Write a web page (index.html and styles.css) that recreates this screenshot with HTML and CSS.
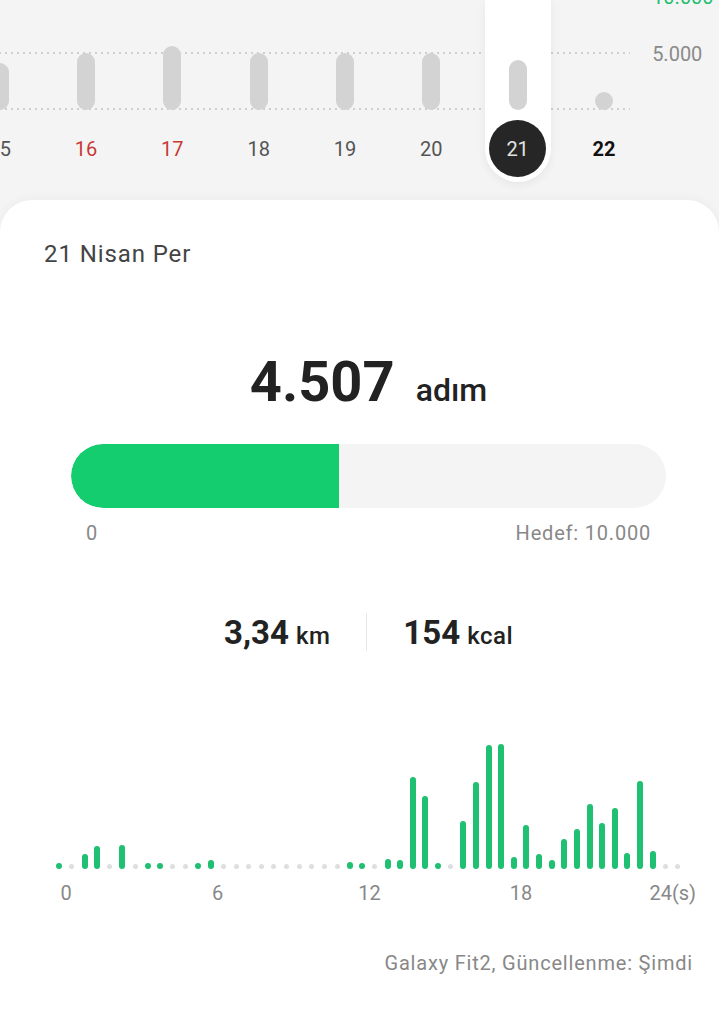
FILE: index.html
```html
<!DOCTYPE html>
<html lang="tr">
<head>
    <meta charset="UTF-8">
    <meta name="viewport" content="width=device-width, initial-scale=1.0">
    <title>Adımlar</title>
    <link rel="stylesheet" href="styles.css">
</head>
<body>
    <section class="week">
        <div class="week-days">
            <div class="day"><div class="day-inner"><div class="day-plot"><span class="day-bar" style="height:47px"></span></div><span class="day-num">15</span></div></div>
            <div class="day"><div class="day-inner"><div class="day-plot"><span class="day-bar" style="height:57px"></span></div><span class="day-num holiday">16</span></div></div>
            <div class="day"><div class="day-inner"><div class="day-plot"><span class="day-bar" style="height:64px"></span></div><span class="day-num holiday">17</span></div></div>
            <div class="day"><div class="day-inner"><div class="day-plot"><span class="day-bar" style="height:57px"></span></div><span class="day-num">18</span></div></div>
            <div class="day"><div class="day-inner"><div class="day-plot"><span class="day-bar" style="height:57px"></span></div><span class="day-num">19</span></div></div>
            <div class="day"><div class="day-inner"><div class="day-plot"><span class="day-bar" style="height:57px"></span></div><span class="day-num">20</span></div></div>
            <div class="day active"><div class="day-inner"><div class="day-plot"><span class="day-bar" style="height:50px"></span></div><span class="day-num">21</span></div></div>
            <div class="day"><div class="day-inner"><div class="day-plot"><span class="day-bar" style="height:18px"></span></div><span class="day-num today">22</span></div></div>
        </div>
        <div class="week-axis">
            <span class="goal-line">10.000</span>
            <span>5.000</span>
        </div>
    </section>

    <main class="card">
        <div class="date">21 Nisan Per</div>

        <div class="content">
            <div class="steps">
                <span class="steps-value">4.507</span>
                <span class="steps-unit">adım</span>
            </div>

            <div class="progress"><div class="progress-fill" style="width:45.07%"></div></div>
            <div class="progress-scale">
                <span>0</span>
                <span>Hedef: 10.000</span>
            </div>

            <div class="stats">
                <div class="stat"><b>3,34</b><span>km</span></div>
                <div class="stat-divider"></div>
                <div class="stat"><b>154</b><span>kcal</span></div>
            </div>

            <div class="hourly" id="hourly"></div>
            <div class="hourly-axis">
                <span>0</span>
                <span>6</span>
                <span>12</span>
                <span>18</span>
                <span>24(s)</span>
            </div>
        </div>

        <div class="source">Galaxy Fit2, Güncellenme: Şimdi</div>
    </main>

    <script>
        const slots = [6,0,15,23,0,24,0,6,6,0,0,5,9,0,0,0,0,0,0,0,0,0,0,7,5,0,10,9,92,73,5,0,48,87,124,125,12,44,15,9,30,40,65,46,61,16,88,18,0,0]
        const hourly = document.getElementById("hourly")

        slots.forEach(h => {
            let slot = document.createElement("div")
            slot.className = "slot"
            let mark = document.createElement("span")
            if (h > 0) {
                mark.className = "slot-bar"
                mark.style.height = h + "px"
            } else {
                mark.className = "slot-empty"
            }
            slot.appendChild(mark)
            hourly.appendChild(slot)
        })
    </script>
</body>
</html>
```

FILE: styles.css
```css
* {
    box-sizing: border-box;
}
html, body {
    margin: 0;
    padding: 0;
}
body {
    width: 719px;
    min-height: 100vh;
    overflow: hidden;
    display: flex;
    flex-direction: column;
    background: #f4f4f4;
    font-family: Roboto, "Noto Sans", sans-serif;
    color: #222;
}

/* haftalik grafik */
.week {
    display: flex;
    height: 200px;
}
.week-days {
    display: flex;
    flex: 0 0 auto;
    margin-left: -43.5px;
    background-image:
        repeating-linear-gradient(to right, #cfcfcf 0 2px, transparent 2px 6px),
        repeating-linear-gradient(to right, #cfcfcf 0 2px, transparent 2px 6px);
    background-size: 673px 2px, 673px 2px;
    background-position: 0 52px, 0 108px;
    background-repeat: no-repeat;
}
.day {
    width: 86.33px;
    display: flex;
    justify-content: center;
}
.day-inner {
    width: 66px;
    height: 182px;
    display: flex;
    flex-direction: column;
    align-items: center;
    border-radius: 0 0 33px 33px;
}
.day.active .day-inner {
    background: #fff;
    box-shadow: 0 3px 10px rgba(0, 0, 0, .06);
}
.day-plot {
    height: 110px;
    display: flex;
    align-items: flex-end;
}
.day-bar {
    width: 18px;
    border-radius: 9px;
    background: #d3d3d3;
}
.day-num {
    margin-top: 10px;
    width: 57px;
    height: 57px;
    border-radius: 50%;
    display: flex;
    align-items: center;
    justify-content: center;
    font-size: 20px;
    color: #555;
}
.day-num.holiday {
    color: #c83a36;
}
.day-num.today {
    color: #111;
    font-weight: 700;
}
.day.active .day-num {
    background: #262626;
    color: #e2e2e2;
}
.week-axis {
    margin-left: 5px;
    display: flex;
    flex-direction: column;
    gap: 33px;
    margin-top: -15px;
    font-size: 20px;
    line-height: 24px;
    color: #8a8a8a;
}
.goal-line {
    color: #1fbf72;
}

/* gunluk kart */
.card {
    flex: 1;
    background: #fff;
    border-radius: 32px 32px 0 0;
    box-shadow: 0 -2px 10px rgba(0, 0, 0, .035);
    padding: 39px 26px 0 44px;
}
.date {
    font-size: 24px;
    line-height: 30px;
    letter-spacing: 0.9px;
    color: #444;
}
.content {
    margin: 0 27px;
}
.steps {
    margin-top: 80px;
    display: flex;
    justify-content: center;
    align-items: baseline;
    gap: 21px;
    line-height: 66px;
}
.steps-value {
    font-size: 56px;
    font-weight: 700;
    color: #222;
}
.steps-unit {
    font-size: 32px;
    font-weight: 500;
}
.progress {
    margin-top: 21px;
    height: 64px;
    border-radius: 32px;
    background: #f4f4f4;
    overflow: hidden;
}
.progress-fill {
    height: 100%;
    border-radius: 32px 0 0 32px;
    background: #13cd6f;
}
.progress-scale {
    margin-top: 13px;
    padding: 0 15px;
    display: flex;
    justify-content: space-between;
    font-size: 20px;
    line-height: 24px;
    letter-spacing: 0.8px;
    color: #888;
}
.stats {
    margin-top: 67px;
    display: flex;
    justify-content: center;
    align-items: center;
    gap: 36px;
    height: 40px;
}
.stat {
    display: flex;
    align-items: baseline;
    gap: 7px;
}
.stat b {
    font-size: 33px;
    font-weight: 700;
}
.stat span {
    font-size: 24px;
    font-weight: 500;
    letter-spacing: 0.5px;
}
.stat-divider {
    width: 1px;
    height: 38px;
    background: #e8e8e8;
}

/* saatlik grafik */
.hourly {
    margin: 77px -19px 0 -18px;
    height: 140px;
    display: flex;
    align-items: flex-end;
}
.slot {
    flex: 0 0 12.64px;
    display: flex;
    justify-content: center;
    align-items: flex-end;
}
.slot-bar {
    width: 6px;
    min-height: 6px;
    border-radius: 3px;
    background: #1fc072;
}
.slot-empty {
    width: 5px;
    height: 5px;
    border-radius: 50%;
    background: #dedede;
}
.hourly-axis {
    margin: 12px 0 0 -5px;
    display: flex;
    gap: 151.7px;
    font-size: 20px;
    line-height: 24px;
    color: #888;
}
.hourly-axis span {
    width: 0;
    display: flex;
    justify-content: center;
    white-space: nowrap;
}
.source {
    margin-top: 46px;
    text-align: right;
    font-size: 20px;
    line-height: 24px;
    letter-spacing: 0.8px;
    color: #888;
}
```
